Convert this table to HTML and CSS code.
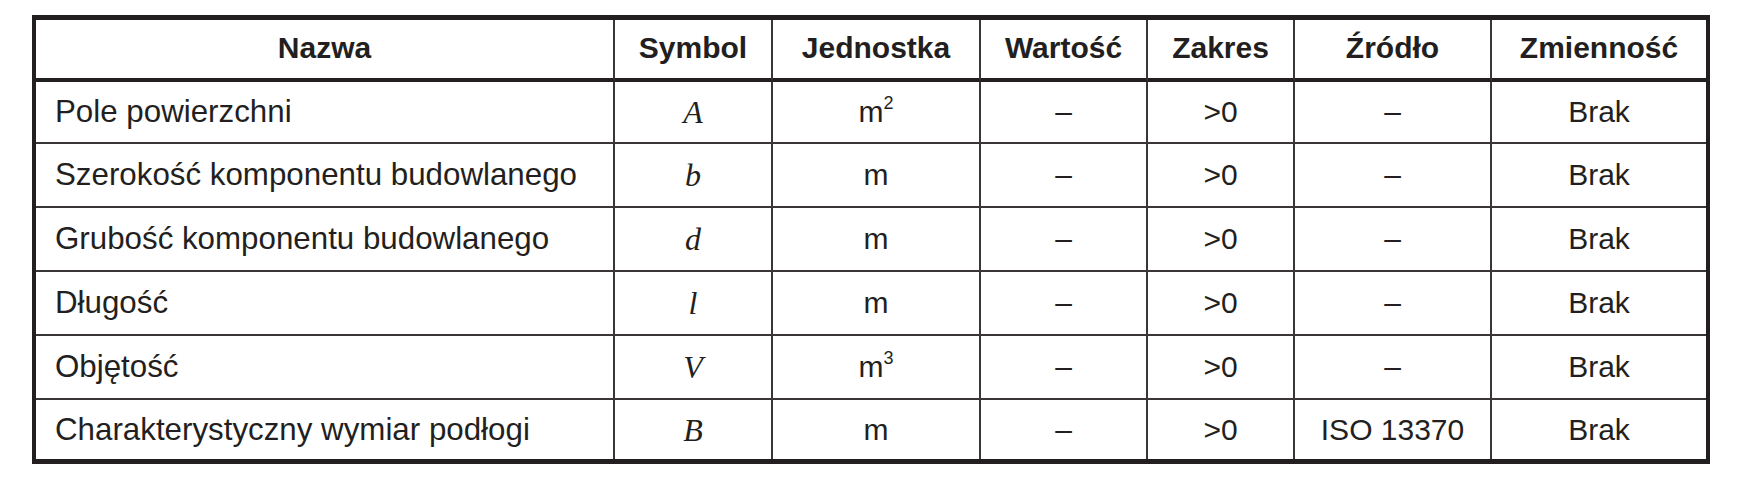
FILE: index.html
```html
<!DOCTYPE html>
<html lang="pl">
<head>
<meta charset="utf-8">
<title>Tabela</title>
<link rel="stylesheet" href="styles.css">
</head>
<body>
<table class="params">
  <thead>
    <tr>
      <th class="c-name">Nazwa</th>
      <th class="c-sym">Symbol</th>
      <th class="c-unit">Jednostka</th>
      <th class="c-val">Wartość</th>
      <th class="c-range">Zakres</th>
      <th class="c-src">Źródło</th>
      <th class="c-var">Zmienność</th>
    </tr>
  </thead>
  <tbody>
    <tr>
      <td class="name">Pole powierzchni</td>
      <td class="sym">A</td>
      <td>m<sup>2</sup></td>
      <td>–</td>
      <td>&gt;0</td>
      <td>–</td>
      <td>Brak</td>
    </tr>
    <tr>
      <td class="name">Szerokość komponentu budowlanego</td>
      <td class="sym">b</td>
      <td>m</td>
      <td>–</td>
      <td>&gt;0</td>
      <td>–</td>
      <td>Brak</td>
    </tr>
    <tr>
      <td class="name">Grubość komponentu budowlanego</td>
      <td class="sym">d</td>
      <td>m</td>
      <td>–</td>
      <td>&gt;0</td>
      <td>–</td>
      <td>Brak</td>
    </tr>
    <tr>
      <td class="name">Długość</td>
      <td class="sym">l</td>
      <td>m</td>
      <td>–</td>
      <td>&gt;0</td>
      <td>–</td>
      <td>Brak</td>
    </tr>
    <tr>
      <td class="name">Objętość</td>
      <td class="sym">V</td>
      <td>m<sup>3</sup></td>
      <td>–</td>
      <td>&gt;0</td>
      <td>–</td>
      <td>Brak</td>
    </tr>
    <tr>
      <td class="name">Charakterystyczny wymiar podłogi</td>
      <td class="sym">B</td>
      <td>m</td>
      <td>–</td>
      <td>&gt;0</td>
      <td>ISO 13370</td>
      <td>Brak</td>
    </tr>
  </tbody>
</table>
</body>
</html>
```

FILE: styles.css
```css
html, body {
  margin: 0;
  padding: 0;
  background: #ffffff;
}

body {
  font-family: "Liberation Sans", Arial, sans-serif;
  color: #231f20;
}

.params {
  margin: 15px 0 0 32px;
  width: 1678px;
  table-layout: fixed;
  border-collapse: separate;
  border-spacing: 0;
  border-style: solid;
  border-color: #231f20;
  border-width: 5px 4px 5px 4px;
}

.params th,
.params td {
  box-sizing: border-box;
  padding: 0;
  text-align: center;
  vertical-align: middle;
  border-right: 2px solid #3a3637;
  border-bottom: 2px solid #3a3637;
  font-size: 30px;
  line-height: 1;
  white-space: nowrap;
}

.params th:last-child,
.params td:last-child {
  border-right: 0;
}

.params th {
  font-weight: bold;
  height: 62px;
  border-bottom: 4px solid #231f20;
  padding-bottom: 2px;
}

.params tbody tr {
  height: 64px;
}

.params tbody tr:first-child {
  height: 62px;
}

.params tbody tr:last-child {
  height: 59px;
}

.params tbody tr:last-child td {
  border-bottom: 0;
}

.c-name { width: 579px; }
.c-sym { width: 158px; }
.c-unit { width: 208px; }
.c-val { width: 167px; }
.c-range { width: 147px; }
.c-src { width: 197px; }
.c-var { width: 214px; }

.params td.name {
  text-align: left;
  padding-left: 19px;
  font-size: 31.3px;
}

.params td.sym {
  font-family: "Liberation Serif", "Times New Roman", serif;
  font-style: italic;
  font-size: 32px;
}

.params sup {
  font-size: 0.6em;
  line-height: 0;
  vertical-align: 0.7em;
}
```
